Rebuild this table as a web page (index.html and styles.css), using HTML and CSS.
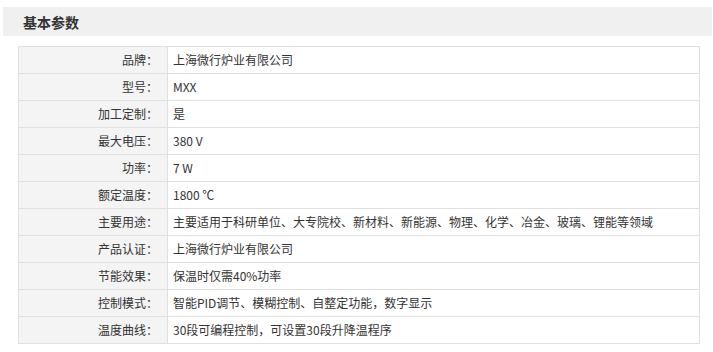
FILE: index.html
```html
<!DOCTYPE html>
<html lang="zh">
<head>
<meta charset="utf-8">
<title>基本参数</title>
<link rel="stylesheet" href="styles.css">
</head>
<body>
<div class="panel">
  <div class="panel-head"><h2 class="panel-title">基本参数</h2></div>
  <table class="params">
    <tbody>
      <tr><th class="label">品牌：</th><td class="value">上海微行炉业有限公司</td></tr>
      <tr><th class="label">型号：</th><td class="value">MXX</td></tr>
      <tr><th class="label">加工定制：</th><td class="value">是</td></tr>
      <tr><th class="label">最大电压：</th><td class="value">380 V</td></tr>
      <tr><th class="label">功率：</th><td class="value">7 W</td></tr>
      <tr><th class="label">额定温度：</th><td class="value">1800 ℃</td></tr>
      <tr><th class="label">主要用途：</th><td class="value">主要适用于科研单位、大专院校、新材料、新能源、物理、化学、冶金、玻璃、锂能等领域</td></tr>
      <tr><th class="label">产品认证：</th><td class="value">上海微行炉业有限公司</td></tr>
      <tr><th class="label">节能效果：</th><td class="value">保温时仅需40%功率</td></tr>
      <tr><th class="label">控制模式：</th><td class="value">智能PID调节、模糊控制、自整定功能，数字显示</td></tr>
      <tr><th class="label">温度曲线：</th><td class="value">30段可编程控制，可设置30段升降温程序</td></tr>
    </tbody>
  </table>
</div>
</body>
</html>
```
FILE: styles.css
```css
html, body {
  margin: 0;
  padding: 0;
  background: #fff;
}
body {
  font-family: "Noto Sans CJK SC", "Liberation Sans", sans-serif;
  font-size: 12px;
  color: #333;
}
.panel {
  padding-top: 7px;
}
.panel-head {
  margin: 0 1px 0 3px;
  height: 29px;
  background: #f0f0f0;
  display: flex;
  align-items: center;
  padding-left: 20px;
}
.panel-title {
  margin: 0;
  font-size: 14px;
  font-weight: bold;
  color: #333;
  line-height: 1;
}
.params {
  margin: 10px 0 0 18px;
  width: 682px;
  border-collapse: collapse;
  border: 1px solid #e0e0e0;
}
.params th,
.params td {
  border: 1px solid #e0e0e0;
  height: 27px;
  padding: 0;
  box-sizing: border-box;
  line-height: 16px;
  font-weight: normal;
  vertical-align: middle;
}
.label {
  width: 149px;
  background: #f4f4f4;
  text-align: right;
  padding-right: 9px !important;
}
.value {
  background: #fff;
  text-align: left;
  padding-left: 5px !important;
}
```
